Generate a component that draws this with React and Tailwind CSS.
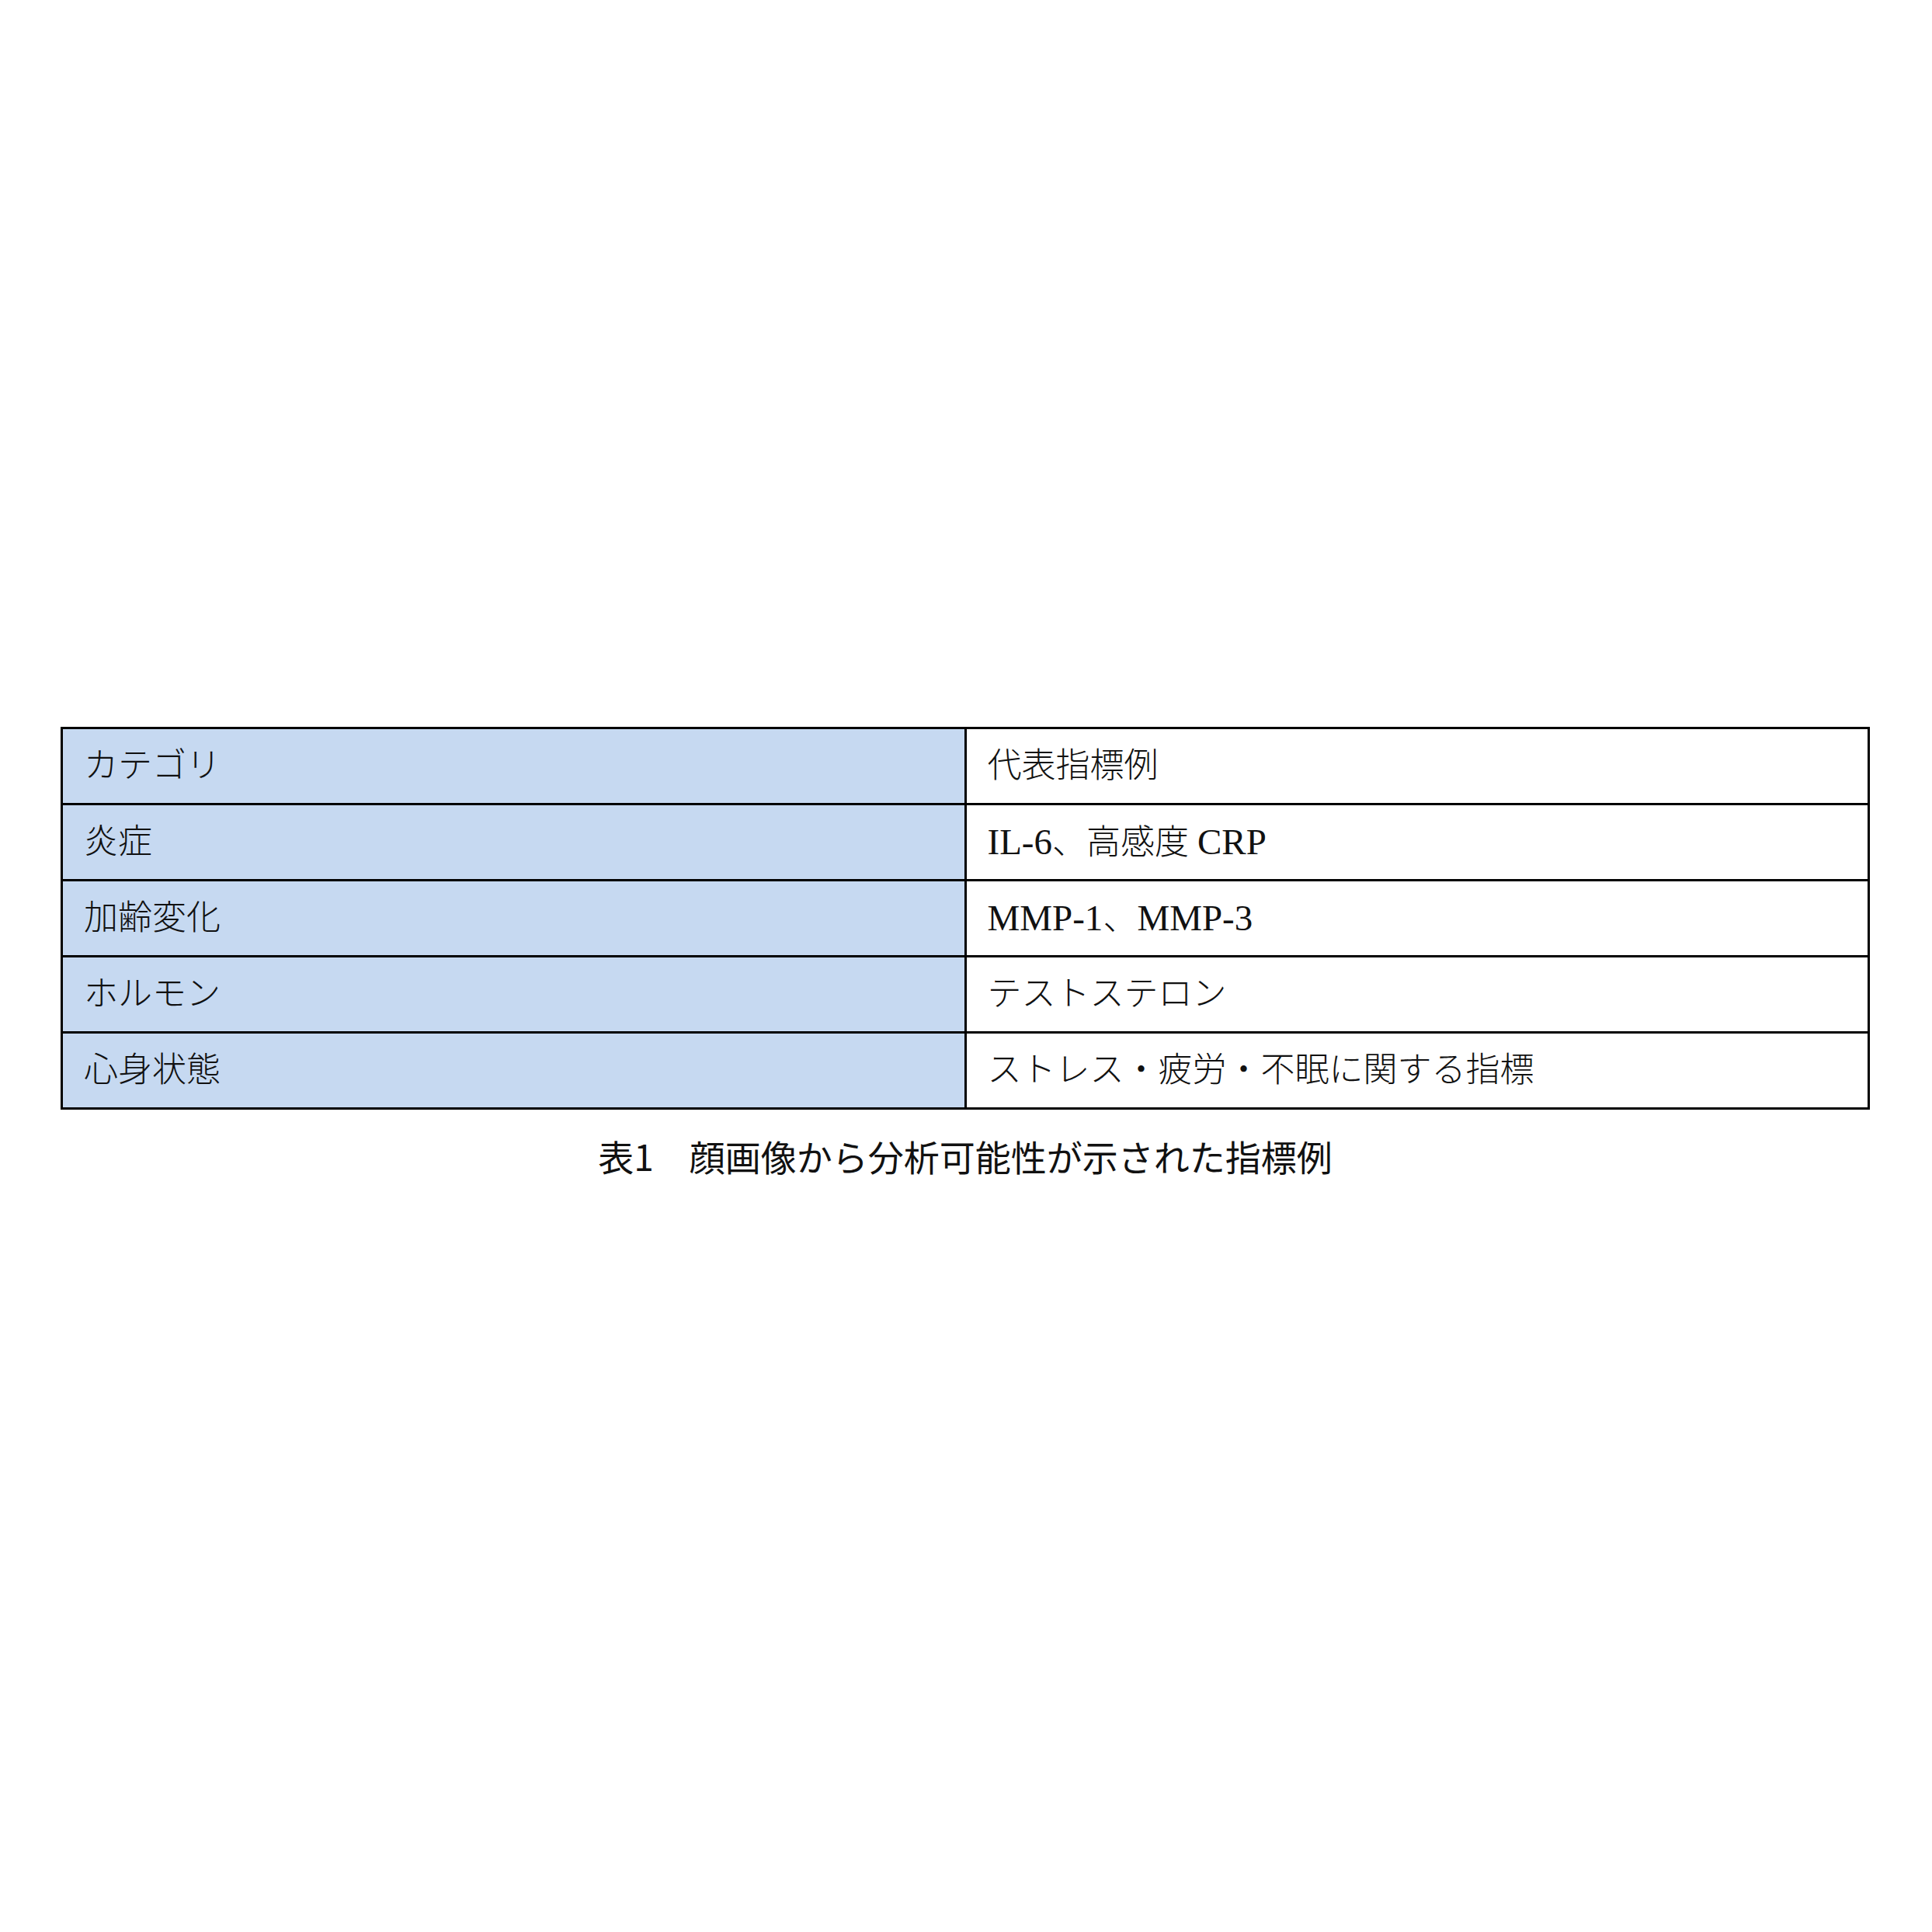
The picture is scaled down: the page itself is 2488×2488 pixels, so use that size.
const rows = [
  [["カテゴリ"], ["代表指標例"]],
  [["炎症"], [{ l: "IL-6" }, "、高感度 ", { l: "CRP" }]],
  [["加齢変化"], [{ l: "MMP-1" }, "、", { l: "MMP-3" }]],
  [["ホルモン"], ["テストステロン"]],
  [["心身状態"], ["ストレス・疲労・不眠に関する指標"]],
];

function Cell({ parts, shaded }) {
  return (
    <td
      className={`h-[98px] w-1/2 border-[3px] border-black pl-[27px] align-middle ${
        shaded ? "bg-[#c6d9f1]" : "bg-white"
      }`}
    >
      <span className="whitespace-nowrap text-[44px] font-light leading-none text-[#111]">
        {parts.map((p, i) =>
          typeof p === "string" ? (
            <span key={i}>{p}</span>
          ) : (
            <span key={i} className="text-[47px]">
              {p.l}
            </span>
          )
        )}
      </span>
    </td>
  );
}

export default function App() {
  return (
    <div className="w-[2488px] h-[2488px] bg-white pt-[936px] pl-[78px]">
      <div className="w-[2330px]">
        <table
          className="w-full table-fixed border-collapse"
          style={{ fontFamily: "'Liberation Serif', 'Noto Sans CJK JP', serif" }}
        >
          <tbody>
            {rows.map(([cat, ex], i) => (
              <tr key={i}>
                <Cell shaded parts={cat} />
                <Cell parts={ex} />
              </tr>
            ))}
          </tbody>
        </table>
        <p
          className="mt-[27px] text-center text-[46px] leading-[64px] text-[#111]"
          style={{ fontFamily: "'Noto Sans CJK JP', sans-serif" }}
        >
          表1　顔画像から分析可能性が示された指標例
        </p>
      </div>
    </div>
  );
}
